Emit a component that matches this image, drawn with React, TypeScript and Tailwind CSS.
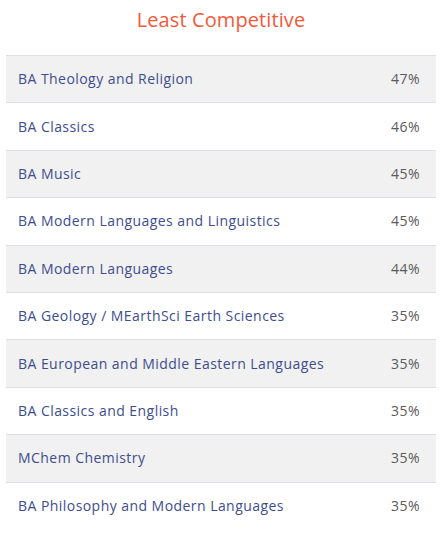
const rows = [
  { name: "BA Theology and Religion", pct: "47%" },
  { name: "BA Classics", pct: "46%" },
  { name: "BA Music", pct: "45%" },
  { name: "BA Modern Languages and Linguistics", pct: "45%" },
  { name: "BA Modern Languages", pct: "44%" },
  { name: "BA Geology / MEarthSci Earth Sciences", pct: "35%" },
  { name: "BA European and Middle Eastern Languages", pct: "35%" },
  { name: "BA Classics and English", pct: "35%" },
  { name: "MChem Chemistry", pct: "35%" },
  { name: "BA Philosophy and Modern Languages", pct: "35%" },
];

export default function App() {
  return (
    <div className="w-[442px] h-[541px] bg-white font-['Open_Sans',sans-serif]">
      <h2 className="h-[55px] pt-[6px] text-center text-[20px] leading-[28px] tracking-[0.1px] text-[#f4593b]">
        Least Competitive
      </h2>
      <div className="mx-[6px] border-t border-[#dedfe6]">
        {rows.map((r, i) => (
          <div
            key={r.name}
            className={`flex h-[47.4px] items-center justify-between pb-[1px] pl-[12px] pr-[16px] text-[14px] tracking-[0.45px] ${
              i < rows.length - 1 ? "border-b border-[#dedfe6]" : ""
            } ${i % 2 === 0 ? "bg-[#f1f1f1]" : "bg-white"}`}
          >
            <span className="text-[#3d4d8f]">{r.name}</span>
            <span className="text-[#5a5a5a]">{r.pct}</span>
          </div>
        ))}
      </div>
    </div>
  );
}
